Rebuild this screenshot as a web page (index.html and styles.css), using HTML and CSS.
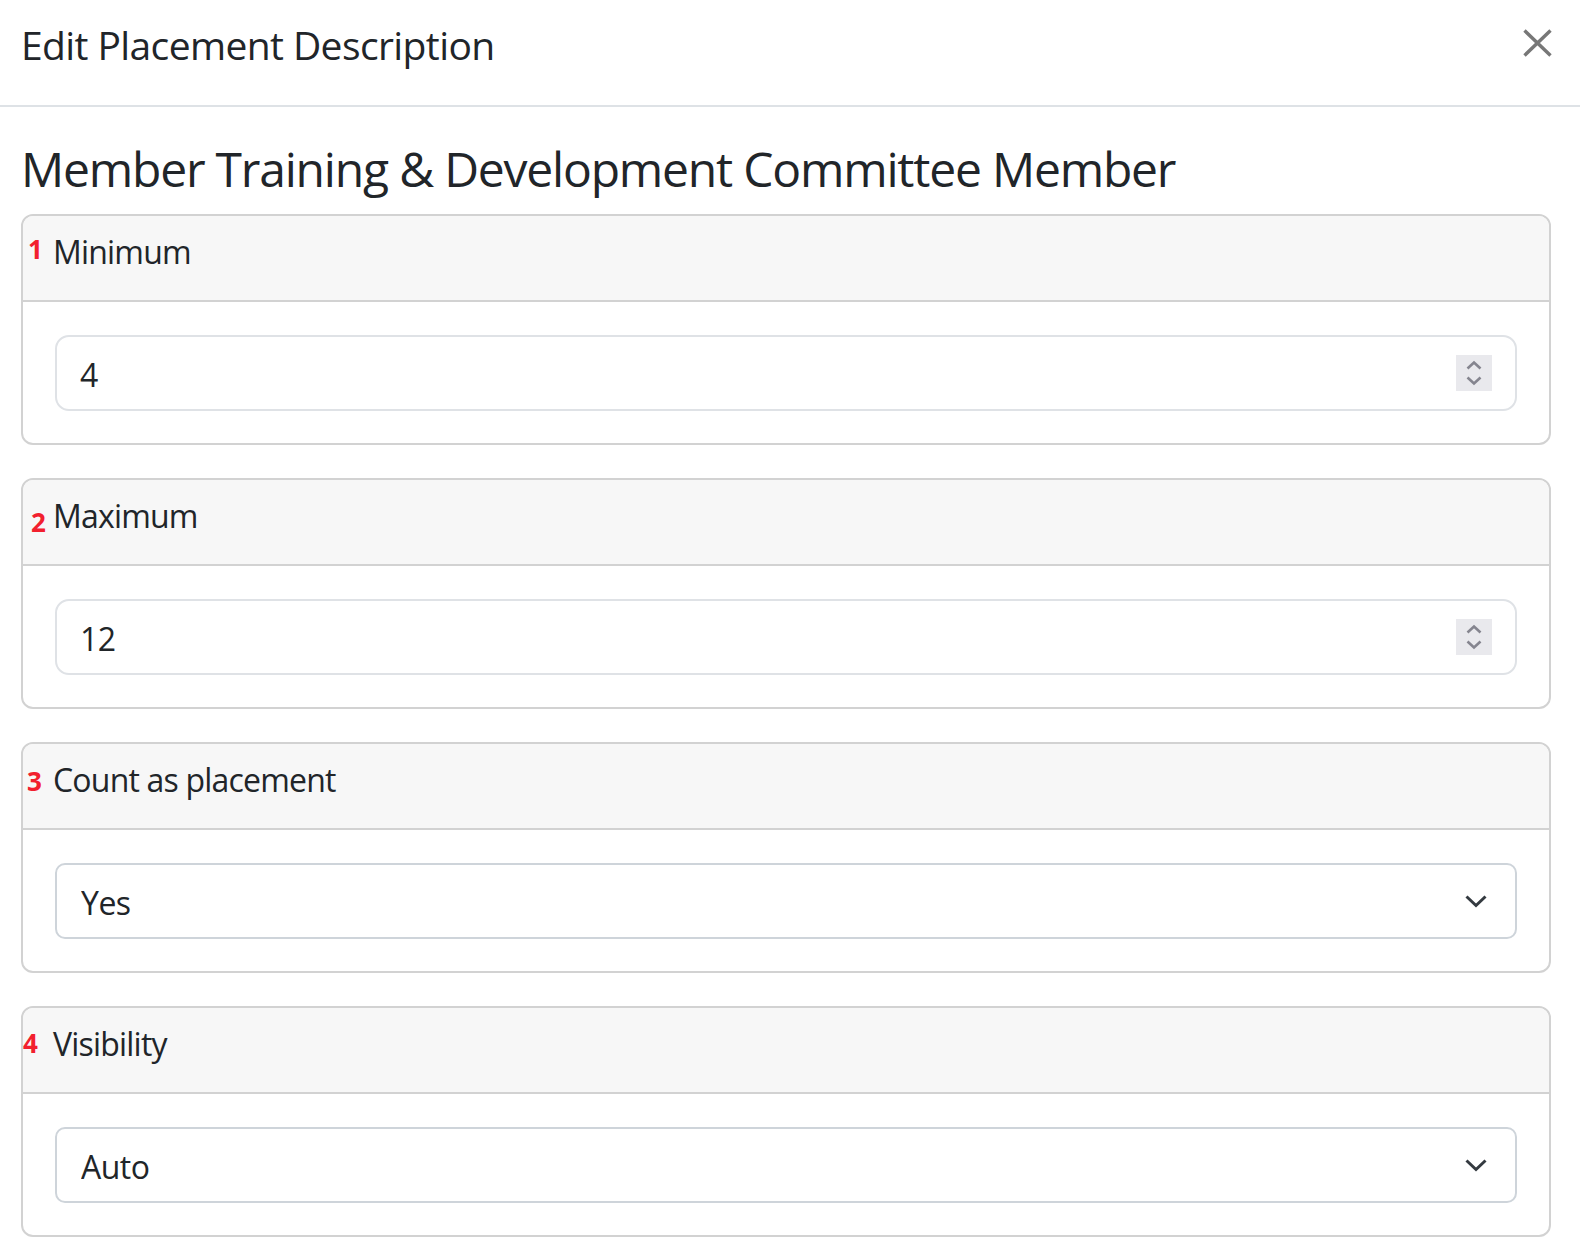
FILE: index.html
```html
<!DOCTYPE html>
<html lang="en">
<head>
<meta charset="utf-8">
<title>Edit Placement Description</title>
<link rel="stylesheet" href="styles.css">
</head>
<body>
<div class="modal">
  <header class="modal-header">
    <h5 class="modal-title">Edit Placement Description</h5>
    <button class="close" type="button" aria-label="Close">
      <svg width="29" height="28" viewBox="0 0 29 28"><path d="M1.5 1.5 L27.5 26.5 M27.5 1.5 L1.5 26.5" stroke="#777" stroke-width="3.4" fill="none"/></svg>
    </button>
  </header>
  <main class="modal-body">
    <h3 class="role">Member Training &amp; Development Committee Member</h3>

    <section class="card">
      <div class="card-header"><span class="marker m1">1</span>Minimum</div>
      <div class="card-body">
        <div class="field field-number">
          <input class="control" type="number" value="4">
          <span class="spinner"><svg width="36" height="36" viewBox="0 0 36 36"><path d="M11.5 13.5 L18 7.5 L24.5 13.5 M11.5 22.5 L18 28.5 L24.5 22.5" stroke="#85858f" stroke-width="2.6" fill="none"/></svg></span>
        </div>
      </div>
    </section>

    <section class="card">
      <div class="card-header"><span class="marker m2">2</span>Maximum</div>
      <div class="card-body">
        <div class="field field-number">
          <input class="control" type="number" value="12">
          <span class="spinner"><svg width="36" height="36" viewBox="0 0 36 36"><path d="M11.5 13.5 L18 7.5 L24.5 13.5 M11.5 22.5 L18 28.5 L24.5 22.5" stroke="#85858f" stroke-width="2.6" fill="none"/></svg></span>
        </div>
      </div>
    </section>

    <section class="card">
      <div class="card-header"><span class="marker m3">3</span>Count as placement</div>
      <div class="card-body">
        <div class="field field-select">
          <select class="control"><option>Yes</option><option>No</option></select>
          <svg class="caret" width="22" height="13" viewBox="0 0 22 13"><path d="M1.5 1.5 L11 10.5 L20.5 1.5" stroke="#343a40" stroke-width="3" fill="none"/></svg>
        </div>
      </div>
    </section>

    <section class="card">
      <div class="card-header"><span class="marker m4">4</span>Visibility</div>
      <div class="card-body">
        <div class="field field-select">
          <select class="control"><option>Auto</option><option>Show</option><option>Hide</option></select>
          <svg class="caret" width="22" height="13" viewBox="0 0 22 13"><path d="M1.5 1.5 L11 10.5 L20.5 1.5" stroke="#343a40" stroke-width="3" fill="none"/></svg>
        </div>
      </div>
    </section>
  </main>
</div>
</body>
</html>
```

FILE: styles.css
```css
html, body {
  margin: 0;
  padding: 0;
  background: #ffffff;
}

body {
  font-family: "Open Sans", "Noto Sans", "Liberation Sans", sans-serif;
  color: #212529;
}

.modal-header {
  display: flex;
  justify-content: space-between;
  align-items: flex-start;
  padding: 16px 28px 31px 21px;
  border-bottom: 2px solid #dee2e6;
}

.modal-title {
  margin: 0;
  font-size: 39px;
  line-height: 58px;
  font-weight: 400;
  letter-spacing: -0.6px;
}

.close {
  display: block;
  margin: 13px 0 0;
  padding: 0;
  border: 0;
  background: none;
  cursor: pointer;
}

.close svg {
  display: block;
}

.modal-body {
  padding: 0 29px 0 21px;
}

.role {
  margin: 32px 0 15px;
  font-size: 48px;
  line-height: 60px;
  font-weight: 400;
  letter-spacing: -1.2px;
}

.card {
  border: 2px solid #d2d2d2;
  border-radius: 12px;
  overflow: hidden;
  margin-bottom: 33px;
}

.card-header {
  position: relative;
  background: #f7f7f7;
  border-bottom: 2px solid #d2d2d2;
  padding: 12px 30px 24px;
  font-size: 32px;
  line-height: 48px;
  letter-spacing: -0.8px;
}

.marker {
  position: absolute;
  color: #f2202e;
  font-weight: 700;
  font-size: 26px;
  line-height: 1;
  letter-spacing: 0;
}

.m1 { top: 20px; left: 5px; }
.m2 { top: 29px; left: 8px; }
.m3 { top: 24px; left: 4px; }
.m4 { top: 22px; left: 0; }

.card-body {
  padding: 33px 32px 32px;
}

.field {
  display: flex;
  align-items: center;
  box-sizing: border-box;
  height: 76px;
  border: 2px solid #ced4da;
  background: #ffffff;
}

.field-number {
  border-color: #dfe2e6;
  border-radius: 14px;
  padding: 0 23px 0 23px;
}

.field-select {
  border-radius: 10px;
  padding: 0 28px 0 24px;
}

.control {
  flex: 1;
  min-width: 0;
  margin: 0;
  padding: 4px 0 0;
  border: 0;
  outline: 0;
  background: transparent;
  font-family: inherit;
  font-size: 32px;
  line-height: 48px;
  letter-spacing: -0.5px;
  color: #212529;
  -webkit-appearance: none;
  -moz-appearance: textfield;
  appearance: none;
}

.control::-webkit-inner-spin-button,
.control::-webkit-outer-spin-button {
  -webkit-appearance: none;
  margin: 0;
}

.spinner {
  display: block;
  width: 36px;
  height: 36px;
  background: #e9e9ed;
}

.spinner svg,
.caret {
  display: block;
}
```
